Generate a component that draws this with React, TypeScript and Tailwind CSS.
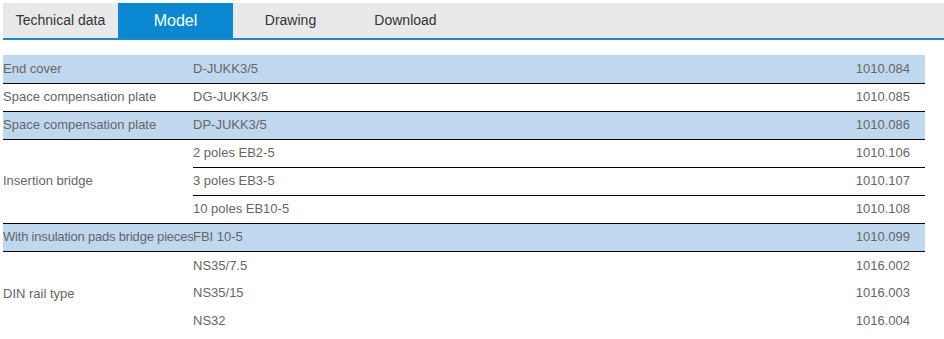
import type { ReactNode } from 'react';

type Row = { name?: string; span?: number; model: string; code: string; blue?: boolean; line?: boolean };

const rows: Row[] = [
  { name: 'End cover', model: 'D-JUKK3/5', code: '1010.084', blue: true, line: true },
  { name: 'Space compensation plate', model: 'DG-JUKK3/5', code: '1010.085', line: true },
  { name: 'Space compensation plate', model: 'DP-JUKK3/5', code: '1010.086', blue: true, line: true },
  { name: 'Insertion bridge', span: 3, model: '2 poles EB2-5', code: '1010.106', line: true },
  { model: '3 poles EB3-5', code: '1010.107', line: true },
  { model: '10 poles EB10-5', code: '1010.108', line: true },
  { name: 'With insulation pads bridge pieces', model: 'FBI 10-5', code: '1010.099', blue: true, line: true },
  { name: 'DIN rail type', span: 3, model: 'NS35/7.5', code: '1016.002' },
  { model: 'NS35/15', code: '1016.003' },
  { model: 'NS32', code: '1016.004' },
];

const tabs = ['Technical data', 'Model', 'Drawing', 'Download'];

function Cell({ children, className = '', rowSpan }: { children: ReactNode; className?: string; rowSpan?: number }) {
  return (
    <td rowSpan={rowSpan} className={`h-[28px] p-0 align-middle whitespace-nowrap ${className}`}>
      {children}
    </td>
  );
}

export default function App() {
  return (
    <div className="w-[944px] h-[339px] bg-white pl-[3px] pt-[3px] font-['Liberation_Sans',Arial,sans-serif]">
      {/* Tab bar */}
      <div className="flex h-[37px] bg-[#e9e9e9] border-b-2 border-[#1a8ad0]">
        {tabs.map((tab) => (
          <div
            key={tab}
            className={`w-[115px] flex items-center justify-center ${
              tab === 'Model' ? 'bg-[#0a88d2] text-white text-[16px]' : 'text-[#333] text-[14px]'
            }`}
          >
            {tab}
          </div>
        ))}
      </div>

      {/* Model table */}
      <table className="mt-[15px] w-[922px] table-fixed border-collapse text-[13px] text-[#666]">
        <colgroup>
          <col className="w-[190px]" />
          <col />
          <col className="w-[200px]" />
        </colgroup>
        <tbody>
          {rows.map((r, i) => {
            const bg = r.blue ? 'bg-[#bfd8ee]' : '';
            const line = r.line ? 'border-b border-black' : '';
            const tight = r.name && r.name.length > 30 ? 'tracking-[-0.2px]' : '';
            return (
              <tr key={i} className={bg}>
                {r.name && (
                  <Cell rowSpan={r.span} className={`overflow-hidden ${tight} ${line}`}>
                    {r.name}
                  </Cell>
                )}
                <Cell className={line}>{r.model}</Cell>
                <Cell className={`text-right pr-[15px] ${line}`}>{r.code}</Cell>
              </tr>
            );
          })}
        </tbody>
      </table>
    </div>
  );
}
